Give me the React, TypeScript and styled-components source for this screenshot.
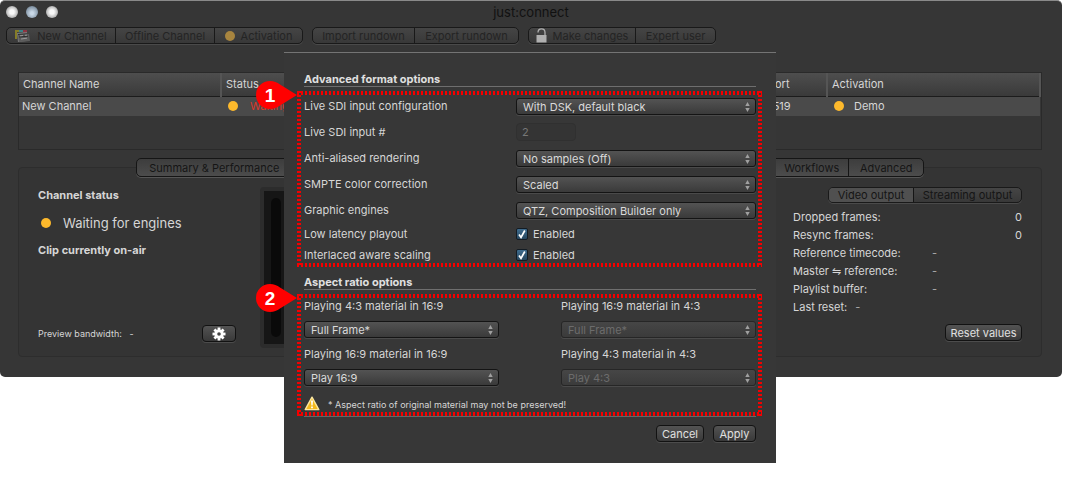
import React from 'react';
import styled, { createGlobalStyle, css } from 'styled-components';

const GlobalStyle = createGlobalStyle`
  *, *::before, *::after { box-sizing: border-box; }
  body {
    margin: 0;
    background: #fff;
    color: #d6d6d6;
    font: 11px/16px Inter, "Liberation Sans", sans-serif;
  }
  button, input, select { font: inherit; color: inherit; margin: 0; }
  h2, h3, p, dl, dd { margin: 0; }
`;

const Stage = styled.div`
  padding-right: 20px;
  min-height: 464px;
`;

const AppWindow = styled.div`
  position: relative;
  border-top: 1px solid #8a8a8a;
  border-radius: 5px;
  background: #363636;
  padding-bottom: 20px;
`;

const TitleBar = styled.header`
  display: grid;
  grid-template-columns: 1fr auto 1fr;
  align-items: center;
  height: 22px;
  padding: 0 6px;
`;

const Lights = styled.div`
  display: flex;
  gap: 8px;
`;

const Light = styled.button<{ $tint?: boolean }>`
  width: 12px;
  height: 12px;
  padding: 0;
  border: 0;
  border-radius: 50%;
  background: ${(p) =>
    p.$tint
      ? 'radial-gradient(circle at 50% 60%, #c9d8e6 15%, #7b8d9e 75%)'
      : 'radial-gradient(circle at 50% 50%, #f8f8f8 25%, #a2a2a2 80%)'};
`;

const Title = styled.div`
  color: #111;
  font-size: 13px;
`;

const Toolbar = styled.div`
  display: flex;
  gap: 9px;
  padding: 4px 6px 0;
`;

const Segments = styled.div`
  display: flex;
  border: 1px solid #191919;
  border-radius: 5px;
  background: linear-gradient(#454545, #383838);
  box-shadow: 0 1px 0 #4a4a4a;
  overflow: hidden;
`;

const ToolButton = styled.button<{ $width: number }>`
  display: flex;
  align-items: center;
  justify-content: center;
  gap: 6px;
  width: ${(p) => p.$width}px;
  height: 15px;
  padding: 0;
  border: 0;
  background: none;
  color: #242424;
  white-space: nowrap;
  & + & { border-left: 1px solid #191919; }
`;

const Dot = styled.span<{ $dim?: boolean }>`
  flex: none;
  display: inline-block;
  width: 10px;
  height: 10px;
  border-radius: 50%;
  background: ${(p) => (p.$dim ? '#a8853f' : '#fdb92c')};
`;

const Main = styled.main`
  padding: 28px 20px 0 18px;
`;

const TableFrame = styled.div`
  min-height: 78px;
  border: 1px solid #2a2a2a;
`;

const ChannelTable = styled.table`
  width: 100%;
  table-layout: fixed;
  border-collapse: collapse;
  th, td {
    padding: 0 4px;
    text-align: left;
    font-weight: 400;
    white-space: nowrap;
    overflow: hidden;
  }
  th {
    height: 23px;
    background: linear-gradient(#4e4e4e, #3a3a3a);
    border-right: 2px solid #555;
    border-bottom: 1px solid #1c1c1c;
  }
  td {
    height: 20px;
    background: #4a4a4a;
    padding-left: 3px;
  }
`;

const StateCell = styled.div<{ $alert?: boolean }>`
  display: flex;
  align-items: center;
  gap: ${(p) => (p.$alert ? 12 : 10)}px;
  padding-left: 4px;
  color: ${(p) => (p.$alert ? '#d8392b' : 'inherit')};
`;

const Tabs = styled.div`
  position: relative;
  display: flex;
  width: 77%;
  margin: 8px auto 0;
  border: 1px solid #151515;
  border-radius: 5px;
  background: linear-gradient(#3d3d3d, #4c4c4c);
  box-shadow: 0 1px 0 #555;
`;

const Tab = styled.button<{ $width: number }>`
  width: ${(p) => p.$width}px;
  height: 17px;
  padding: 0;
  border: 0;
  border-right: 1px solid #151515;
  background: none;
  color: #151515;
  white-space: nowrap;
  &:last-child { border-right: 0; }
`;

const TabFill = styled.span`
  flex: 1;
  border-right: 1px solid #151515;
`;

const Panel = styled.section`
  display: flex;
  gap: 24px;
  min-height: 190px;
  margin-top: -10px;
  padding: 19px 19px 7px 19px;
  border: 1px solid #2d2d2d;
  border-radius: 4px;
  background: #343434;
`;

const StatusColumn = styled.div`
  display: flex;
  flex-direction: column;
  width: 198px;
  padding-bottom: 7px;
`;

const Strong = styled.h3`
  font-size: 11px;
  line-height: 16px;
  font-weight: 700;
`;

const StatusLine = styled.p`
  display: flex;
  align-items: center;
  gap: 12px;
  padding: 12px 0 11px 3px;
  font-size: 13px;
`;

const StatusFoot = styled.div`
  display: flex;
  align-items: center;
  justify-content: space-between;
  margin-top: auto;
  font-size: 9px;
  white-space: pre;
`;

const PushButton = styled.button<{ $width: number }>`
  display: flex;
  align-items: center;
  justify-content: center;
  width: ${(p) => p.$width}px;
  height: 17px;
  padding: 0;
  border: 1px solid #121212;
  border-radius: 4px;
  background: linear-gradient(#535353, #393939);
  box-shadow: 0 1px 0 #4c4c4c;
  color: #e0e0e0;
  white-space: nowrap;
`;

const Meter = styled.div`
  flex: 1;
  margin-bottom: 1px;
  padding: 7px;
  border: 4px solid #2c2c2c;
  border-radius: 4px;
  background: #161616;
`;

const MeterSlot = styled.div`
  width: 10px;
  height: 100%;
  border-radius: 5px;
  background: #0a0a0a;
`;

const OutputColumn = styled.div`
  display: flex;
  flex-direction: column;
  align-items: flex-end;
  width: 229px;
`;

const OutputTab = styled(Tab)<{ $active?: boolean }>`
  height: 14px;
  line-height: 14px;
  background: ${(p) => (p.$active ? '#505050' : 'none')};
`;

const Stats = styled.dl`
  width: 100%;
  margin: 5px 0 8px;
`;

const Stat = styled.div<{ $kind: 'end' | 'mid' | 'near' }>`
  display: flex;
  height: 18px;
  line-height: 18px;
  dt { ${(p) => (p.$kind === 'mid' ? css`width: 139px;` : css`margin-right: 8px;`)} }
  dd { ${(p) => (p.$kind === 'end' ? css`margin-left: auto;` : css`color: #aaa;`)} }
`;

const SheetLayer = styled.div`
  position: absolute;
  top: 51px;
  left: 18px;
  right: 20px;
  display: flex;
  justify-content: center;
`;

const Sheet = styled.form`
  width: 492px;
  padding: 20px 20px 21px;
  border-top: 1px solid #747474;
  background: #373737;
`;

const SheetHeading = styled.h2`
  border-bottom: 1px solid #6e6e6e;
  font-size: 11px;
  line-height: 13px;
  font-weight: 700;
  color: #e0e0e0;
`;

const Group = styled.div`
  position: relative;
  padding: 6px 0 2px;
`;

const dash = (dir: string) =>
  `repeating-linear-gradient(${dir}, #f50000 0 2px, transparent 2px 4px)`;

const Outline = styled.div`
  position: absolute;
  inset: 4px -6px 0 -7px;
  pointer-events: none;
  background:
    ${dash('90deg')} top / 100% 4px no-repeat,
    ${dash('90deg')} bottom / 100% 4px no-repeat,
    ${dash('180deg')} left / 4px 100% no-repeat,
    ${dash('180deg')} right / 4px 100% no-repeat;
`;

const Pin = styled.div`
  position: absolute;
  top: -10px;
  left: -41px;
  width: 41px;
  height: 28px;
  svg { position: absolute; inset: 0; }
  span {
    position: relative;
    display: block;
    width: 28px;
    text-align: center;
    color: #fff;
    font: bold 19px/30px "Liberation Sans", sans-serif;
  }
`;

const FormRow = styled.div<{ $short?: boolean }>`
  display: grid;
  grid-template-columns: 212px 1fr;
  align-items: center;
  height: ${(p) => (p.$short ? 21 : 26)}px;
`;

const SelectWrap = styled.div`
  position: relative;
  svg { position: absolute; right: 6px; top: 4px; pointer-events: none; }
`;

const Select = styled.select`
  display: block;
  appearance: none;
  width: 100%;
  height: 17px;
  padding: 0 18px 0 6px;
  border: 1px solid #141414;
  border-radius: 3px;
  background: linear-gradient(#535353, #3a3a3a);
  box-shadow: 0 1px 0 #4a4a4a;
  color: #dadada;
  opacity: 1;
  &:disabled {
    border-color: #262626;
    background: linear-gradient(#464646, #3b3b3b);
    color: #6c6c6c;
  }
`;

const NumberInput = styled.input`
  width: 60px;
  height: 18px;
  padding: 0 5px;
  border: 1px solid #303030;
  border-radius: 4px;
  background: #343434;
  &:disabled { color: #777; }
`;

const CheckLabel = styled.label`
  position: relative;
  display: flex;
  align-items: center;
  gap: 5px;
  svg { position: absolute; left: 0; top: 1px; pointer-events: none; }
`;

const Checkbox = styled.input`
  appearance: none;
  width: 12px;
  height: 12px;
  border: 1px solid #131c24;
  border-radius: 2px;
  background: linear-gradient(#3f6c8e, #27475f);
`;

const RatioGrid = styled.div`
  display: grid;
  grid-template-columns: 195px 195px;
  justify-content: space-between;
  column-gap: 20px;
`;

const Field = styled.div`
  height: 48px;
  padding-top: 2px;
  label { display: block; margin-bottom: 7px; }
`;

const Notice = styled.p`
  display: flex;
  align-items: center;
  gap: 8px;
  height: 22px;
  font-size: 9px;
  svg { flex: none; }
  span { padding-top: 4px; }
`;

const SecondSection = styled.section`
  padding-top: 9px;
`;

const Actions = styled.div`
  display: flex;
  justify-content: flex-end;
  gap: 9px;
  padding-top: 8px;
  border-top: 1px solid #666;
`;

const Arrows = () => (
  <svg width="5" height="10" viewBox="0 0 5 10" fill="#a0a0a0" aria-hidden="true">
    <path d="M2.5 0 4.7 4H.3zM2.5 10 4.7 6H.3z" />
  </svg>
);

type PopupProps = { id: string; options: string[]; disabled?: boolean };

const Popup = ({ id, options, disabled }: PopupProps) => (
  <SelectWrap>
    <Select id={id} disabled={disabled}>
      {options.map((o) => (
        <option key={o}>{o}</option>
      ))}
    </Select>
    <Arrows />
  </SelectWrap>
);

const Callout = ({ n }: { n: number }) => (
  <Pin>
    <svg width="41" height="28" viewBox="0 0 41 28" aria-hidden="true">
      <path fill="#f00" d="M14 0a14 14 0 1 0 0 28c4 0 7-1.500 10-3.500L41 14 24 3.500C21 1.500 18 0 14 0z" />
    </svg>
    <span>{n}</span>
  </Pin>
);

const ClapIcon = () => (
  <svg width="16" height="14" viewBox="0 0 16 14" aria-hidden="true">
    <path d="M0 1h5v2H2v7H0z" fill="#857d28" />
    <path d="M4 1h4v2H4z" fill="#3a8286" />
    <path d="M8 1h4v3H8z" fill="#8d3442" />
    <path d="m2 4 10-1v9l-9 1z" fill="#7a7a7a" />
    <path d="m3 6 11-1 1 7-11 1z" fill="#5c5c5c" />
    <path d="m3 5.500 9-.7M4 8l9-.8" stroke="#2c2c2c" />
    <path d="m5 6.800 3-.3M10 6.300l2-.2M6 10l6-.8" stroke="#9a9a9a" />
  </svg>
);

const LockIcon = () => (
  <svg width="11" height="15" viewBox="0 0 11 15" aria-hidden="true">
    <path d="M2 4.500C2 2 3.500.8 5.500.8S9 2 9 4.500V8" fill="none" stroke="#b0b0b0" strokeWidth="1.300" />
    <path d="M.5 7h10v7.500H.5z" fill="#b0b0b0" />
  </svg>
);

const GearIcon = () => (
  <svg width="14" height="14" viewBox="-7 -7 14 14" fill="#fff" aria-hidden="true">
    {[0, 45, 90, 135].map((a) => (
      <rect key={a} x="-1.400" y="-6.500" width="2.800" height="13" transform={`rotate(${a})`} />
    ))}
    <circle r="4.600" />
    <circle r="1.800" fill="#444" />
  </svg>
);

const CheckMark = () => (
  <svg width="12" height="14" viewBox="0 0 12 14" aria-hidden="true">
    <path d="M3 7.500 5 10.300 8.800 3.500" fill="none" stroke="#fff" strokeWidth="1.700" />
  </svg>
);

const WarningIcon = () => (
  <svg width="16" height="15" viewBox="0 0 16 15" aria-hidden="true">
    <path d="M8 1.200 14.800 13.600H1.200z" fill="#f4b91c" stroke="#fbe7a0" strokeWidth="1.400" strokeLinejoin="round" />
    <path d="M7 4.500h2L8.600 9.500H7.400zM7.100 10.500h1.800v1.800H7.100z" fill="#fff" />
  </svg>
);

const stats: { label: string; value: string; kind: 'end' | 'mid' | 'near' }[] = [
  { label: 'Dropped frames:', value: '0', kind: 'end' },
  { label: 'Resync frames:', value: '0', kind: 'end' },
  { label: 'Reference timecode:', value: '-', kind: 'mid' },
  { label: 'Master ⇋ reference:', value: '-', kind: 'mid' },
  { label: 'Playlist buffer:', value: '-', kind: 'mid' },
  { label: 'Last reset:', value: '-', kind: 'near' },
];

const ratios = [
  { id: 'r1', label: 'Playing 4:3 material in 16:9', value: 'Full Frame*' },
  { id: 'r2', label: 'Playing 16:9 material in 4:3', value: 'Full Frame*', disabled: true },
  { id: 'r3', label: 'Playing 16:9 material in 16:9', value: 'Play 16:9' },
  { id: 'r4', label: 'Playing 4:3 material in 4:3', value: 'Play 4:3', disabled: true },
];

const popups = [
  { id: 'aa', label: 'Anti-aliased rendering', value: 'No samples (Off)' },
  { id: 'smpte', label: 'SMPTE color correction', value: 'Scaled' },
  { id: 'engines', label: 'Graphic engines', value: 'QTZ, Composition Builder only' },
];

const checks = [
  { id: 'latency', label: 'Low latency playout' },
  { id: 'interlace', label: 'Interlaced aware scaling' },
];

export default function App() {
  return (
    <Stage>
      <GlobalStyle />
      <AppWindow>
        <TitleBar>
          <Lights>
            <Light aria-label="Close" />
            <Light aria-label="Minimize" $tint />
            <Light aria-label="Zoom" />
          </Lights>
          <Title>just:connect</Title>
        </TitleBar>

        <Toolbar>
          <Segments>
            <ToolButton $width={108}><ClapIcon />New Channel</ToolButton>
            <ToolButton $width={99}>Offline Channel</ToolButton>
            <ToolButton $width={88}><Dot $dim />Activation</ToolButton>
          </Segments>
          <Segments>
            <ToolButton $width={101}>Import rundown</ToolButton>
            <ToolButton $width={104}>Export rundown</ToolButton>
          </Segments>
          <Segments>
            <ToolButton $width={106}><LockIcon />Make changes</ToolButton>
            <ToolButton $width={80}>Expert user</ToolButton>
          </Segments>
        </Toolbar>

        <Main>
          <TableFrame>
            <ChannelTable>
              <colgroup>
                <col style={{ width: 202 }} />
                <col />
                <col style={{ width: 64 }} />
                <col style={{ width: 213 }} />
              </colgroup>
              <thead>
                <tr><th>Channel Name</th><th>Status</th><th>Port</th><th>Activation</th></tr>
              </thead>
              <tbody>
                <tr>
                  <td>New Channel</td>
                  <td><StateCell $alert><Dot />Waiting</StateCell></td>
                  <td>5519</td>
                  <td><StateCell><Dot />Demo</StateCell></td>
                </tr>
              </tbody>
            </ChannelTable>
          </TableFrame>

          <Tabs>
            <Tab $width={156}>Summary &amp; Performance</Tab>
            <TabFill />
            <Tab $width={74}>Workflows</Tab>
            <Tab $width={74}>Advanced</Tab>
          </Tabs>

          <Panel>
            <StatusColumn>
              <Strong>Channel status</Strong>
              <StatusLine><Dot />Waiting for engines</StatusLine>
              <Strong>Clip currently on-air</Strong>
              <StatusFoot>
                <span>Preview bandwidth:   -</span>
                <PushButton $width={34} aria-label="Settings"><GearIcon /></PushButton>
              </StatusFoot>
            </StatusColumn>
            <Meter><MeterSlot /></Meter>
            <OutputColumn>
              <Segments>
                <OutputTab $width={85} $active>Video output</OutputTab>
                <OutputTab $width={107}>Streaming output</OutputTab>
              </Segments>
              <Stats>
                {stats.map((s) => (
                  <Stat key={s.label} $kind={s.kind}>
                    <dt>{s.label}</dt>
                    <dd>{s.value}</dd>
                  </Stat>
                ))}
              </Stats>
              <PushButton $width={77}>Reset values</PushButton>
            </OutputColumn>
          </Panel>
        </Main>

        <SheetLayer>
          <Sheet onSubmit={(e) => e.preventDefault()}>
            <SheetHeading>Advanced format options</SheetHeading>
            <Group>
              <FormRow>
                <label htmlFor="sdi">Live SDI input configuration</label>
                <Popup id="sdi" options={['With DSK, default black']} />
              </FormRow>
              <FormRow>
                <label htmlFor="num">Live SDI input #</label>
                <NumberInput id="num" defaultValue="2" disabled />
              </FormRow>
              {popups.map((p) => (
                <FormRow key={p.id}>
                  <label htmlFor={p.id}>{p.label}</label>
                  <Popup id={p.id} options={[p.value]} />
                </FormRow>
              ))}
              {checks.map((c) => (
                <FormRow key={c.id} $short>
                  <span id={c.id}>{c.label}</span>
                  <CheckLabel>
                    <Checkbox type="checkbox" defaultChecked aria-describedby={c.id} />
                    <CheckMark />
                    Enabled
                  </CheckLabel>
                </FormRow>
              ))}
              <Outline><Callout n={1} /></Outline>
            </Group>

            <SecondSection>
              <SheetHeading>Aspect ratio options</SheetHeading>
              <Group>
                <RatioGrid>
                  {ratios.map((r) => (
                    <Field key={r.id}>
                      <label htmlFor={r.id}>{r.label}</label>
                      <Popup id={r.id} options={[r.value]} disabled={r.disabled} />
                    </Field>
                  ))}
                </RatioGrid>
                <Notice>
                  <WarningIcon />
                  <span>* Aspect ratio of original material may not be preserved!</span>
                </Notice>
                <Outline><Callout n={2} /></Outline>
              </Group>
            </SecondSection>

            <Actions>
              <PushButton type="button" $width={48}>Cancel</PushButton>
              <PushButton type="submit" $width={43}>Apply</PushButton>
            </Actions>
          </Sheet>
        </SheetLayer>
      </AppWindow>
    </Stage>
  );
}
